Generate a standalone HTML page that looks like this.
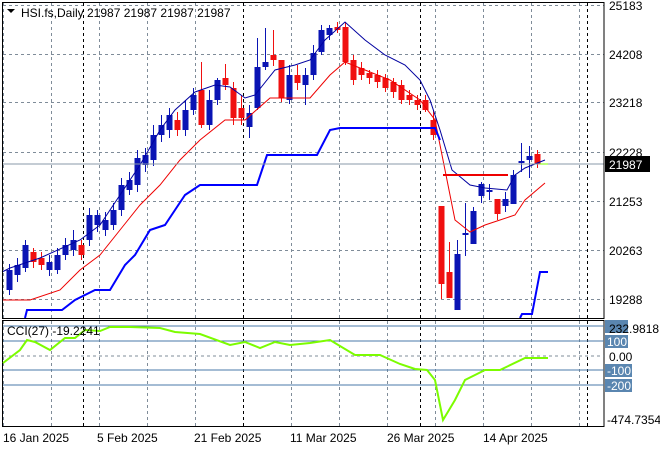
<!DOCTYPE html><html><head><style>body{margin:0;background:#fff}svg{display:block;font-family:"Liberation Sans",sans-serif}</style></head><body>
<svg id="s" width="660" height="450" xmlns="http://www.w3.org/2000/svg">
<rect width="660" height="450" fill="#fff"/>
<g id="grid" stroke="#7f8c99" stroke-dasharray="3,3" stroke-width="1"></g>
<g id="c"></g>
<polyline fill="none" stroke="#0000a0" stroke-width="1" points="2,272 10,268 40,258 80,240 100,225 120,195 140,165 160,130 175,110 195,92 215,85 230,87 245,98 255,95 275,70 295,65 310,60 325,40 345,22 365,40 385,55 405,65 420,80 430,100 440,130 452,170 470,185 485,188 507,190 515,175 525,168 545,160"/>
<polyline fill="none" stroke="#e00" stroke-width="1" points="2,300 30,300 60,290 80,270 100,255 120,230 140,205 160,185 180,160 200,140 225,120 245,120 270,98 290,98 310,98 330,75 345,62 365,70 390,80 420,100 435,120 445,170 455,220 470,232 485,225 500,220 515,215 525,200 545,183"/>
<polyline fill="none" stroke="#0000ff" stroke-width="2" points="25,318 27,310 62,310 75,300 95,290 110,290 125,265 135,255 150,230 165,225 175,210 185,195 200,185 257,185 267,155 317,155 330,130 340,128 435,128 440,140"/>
<polyline fill="none" stroke="#0000ff" stroke-width="2" points="520,318 522,314 532,314 540,272 548,272"/>
<line x1="443" y1="175" x2="508" y2="175" stroke="#e00" stroke-width="2"/>
<line x1="2" y1="164" x2="604" y2="164" stroke="#8a9aa8"/>
<line x1="540" y1="164" x2="548" y2="164" stroke="#7cfc00"/>
<rect x="2.5" y="2.5" width="601.5" height="316" fill="none" stroke="#000"/>
<rect x="2.5" y="320.5" width="601.5" height="106" fill="none" stroke="#000"/>
<g stroke="#4a7aa8"><line x1="3" y1="326" x2="604" y2="326"/><line x1="3" y1="341" x2="604" y2="341"/><line x1="3" y1="370" x2="604" y2="370"/><line x1="3" y1="385" x2="604" y2="385"/></g>
<line x1="3" y1="356" x2="604" y2="356" stroke="#7f8c99" stroke-dasharray="3,3"/>
<polyline fill="none" stroke="#7cfc00" stroke-width="2" points="3,363 20,350 27,340 35,342 50,350 65,338 75,338 85,330 100,331 110,327 130,327 160,328 175,332 200,334 230,345 245,342 260,348 275,342 290,345 310,343 330,340 355,355 380,355 400,364 415,369 427,370 435,380 443,420 455,400 465,380 475,375 485,370 500,370 525,358 548,358"/>
<g font-size="12" fill="#000">
<path d="M7 9 L15 9 L11 13 Z" fill="#000"/>
<text x="21" y="17">HSI.fs,Daily  21987 21987 21987 21987</text>
<text x="7" y="335">CCI(27) -19.2241</text>
<text x="609" y="10">25183</text><text x="609" y="59">24208</text><text x="609" y="107">23218</text><text x="609" y="157">22228</text><text x="609" y="206">21253</text><text x="609" y="255">20263</text><text x="609" y="304">19288</text>
<rect x="605" y="156" width="45" height="16" fill="#000"/><text x="609" y="169" fill="#fff">21987</text>
<rect x="605" y="320" width="23" height="13" fill="#5a86b0"/><text x="609" y="333">232.9818</text>
<rect x="605" y="335" width="23" height="13" fill="#5a86b0"/><text x="607" y="346" fill="#fff">100</text>
<text x="609" y="361">0.00</text>
<rect x="605" y="364" width="27" height="13" fill="#5a86b0"/><text x="607" y="375" fill="#fff">-100</text>
<rect x="605" y="379" width="27" height="13" fill="#5a86b0"/><text x="607" y="390" fill="#fff">-200</text>
<text x="607" y="424">-474.7354</text>
<text x="3" y="442">16 Jan 2025</text><text x="97" y="442">5 Feb 2025</text><text x="194" y="442">21 Feb 2025</text><text x="290" y="442">11 Mar 2025</text><text x="387" y="442">26 Mar 2025</text><text x="483" y="442">14 Apr 2025</text>
</g>
</svg>
<script>
var g=document.getElementById('grid'),c=document.getElementById('c'),ns="http://www.w3.org/2000/svg";
function L(p,x1,y1,x2,y2,col,dash){var l=document.createElementNS(ns,'line');l.setAttribute('x1',x1);l.setAttribute('y1',y1);l.setAttribute('x2',x2);l.setAttribute('y2',y2);l.setAttribute('stroke',col);if(dash)l.setAttribute('stroke-dasharray',dash);p.appendChild(l);}
[5,54,102,152,201,250,299].forEach(y=>L(g,3,y+.5,604,y+.5,'#7f8c99','3,3'));
var blk=[83,243,420,587];
for(var x=3;x<604;x+=48){if(x==243)continue;L(g,x+.5,3,x+.5,318,'#7f8c99','3,3');L(g,x+.5,321,x+.5,426,'#7f8c99','3,3');}
blk.forEach(x=>{L(g,x+.5,3,x+.5,318,'#000','3,3');L(g,x+.5,321,x+.5,426,'#000','3,3');});
// [open,close,high,low] in y coords; blue if close<open (up)
var d=[[290,270,264,295],[275,265,258,282],[268,245,240,272],[252,262,248,268],[258,265,252,270],[270,262,255,276],[270,255,248,274],[255,245,238,260],[250,240,230,256],[245,255,240,260],[240,215,208,246],[225,215,210,232],[230,220,212,236],[225,210,203,230],[210,185,178,216],[190,180,172,195],[185,158,150,192],[165,155,148,172],[160,135,125,166],[135,125,115,142],[130,115,108,138],[120,130,112,136],[130,110,100,136],[110,95,88,115],[90,125,62,128],[125,100,90,130],[100,80,78,105],[78,85,64,90],[88,118,82,125],[108,118,95,125],[127,113,105,138],[108,67,38,110],[67,62,28,70],[55,60,30,66],[60,98,60,102],[100,75,65,104],[75,83,65,90],[85,75,68,105],[75,53,45,80],[52,30,25,55],[35,28,25,40],[27,30,22,33],[27,62,22,65],[60,80,55,85],[68,75,62,80],[73,78,70,84],[75,82,70,88],[78,88,74,92],[82,92,78,98],[85,100,80,104],[95,100,90,105],[100,105,95,110],[100,110,95,112],[120,135,110,140],[206,284,206,299],[272,298,242,298],[310,254,240,310],[233,233,203,256],[244,211,207,244],[196,184,182,203],[190,190,184,200],[199,214,200,220],[206,199,192,212],[204,175,170,204],[163,161,143,172],[160,156,146,178],[154,164,150,168]];
d.forEach((a,i)=>{var x=9+i*8,o=a[0],cl=a[1],up=cl<=o,col=up?'#0a14b4':'#f01010';
L(c,x+.5,a[2],x+.5,a[3],col);var r=document.createElementNS(ns,'rect');var t=Math.min(o,cl),h=Math.max(2,Math.abs(o-cl));r.setAttribute('x',x-2.5);r.setAttribute('y',t);r.setAttribute('width',6);r.setAttribute('height',h);r.setAttribute('fill',col);c.appendChild(r);});
</script>
</body></html>
